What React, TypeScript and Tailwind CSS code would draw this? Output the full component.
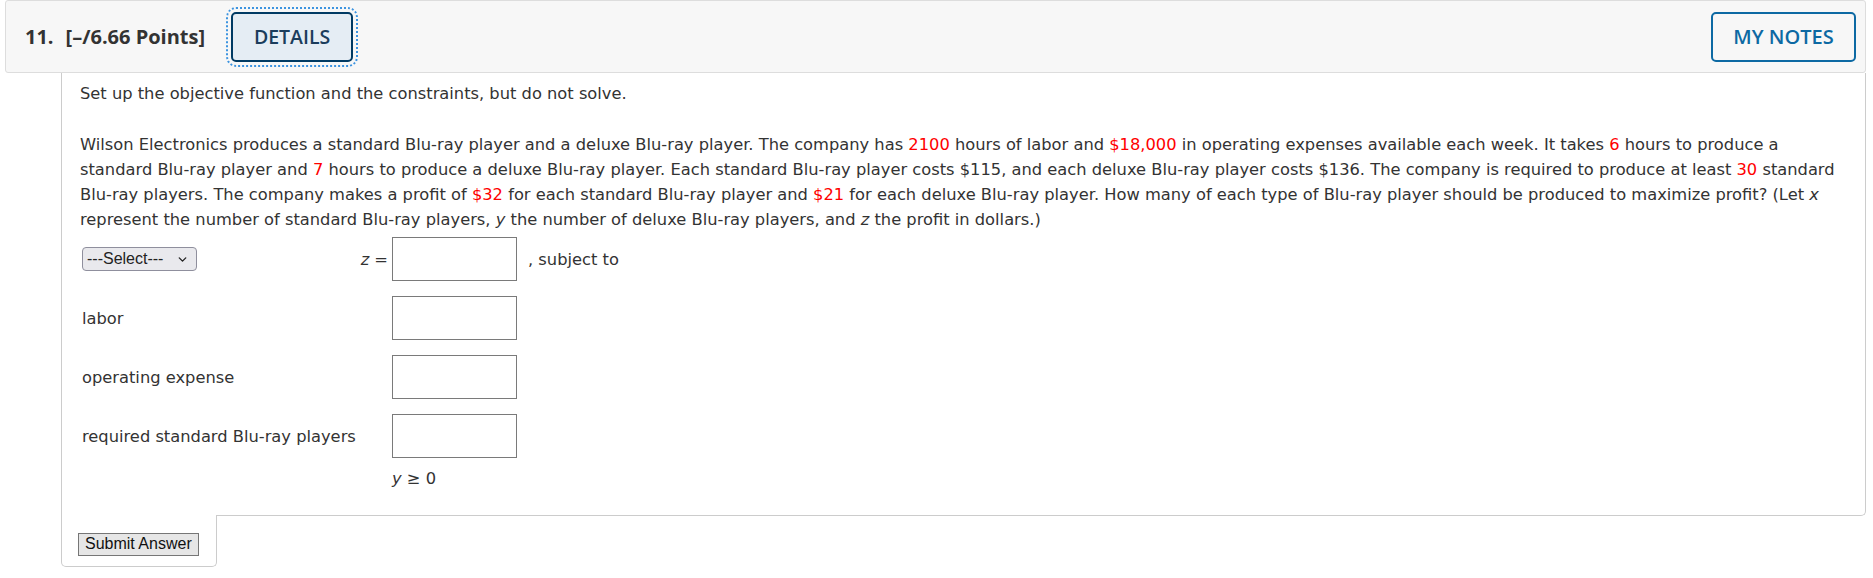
import { ChevronDown } from "lucide-react";

const body = "font-['DejaVu_Sans',Verdana,sans-serif]";
const arial = "font-['Liberation_Sans',Arial,sans-serif]";

const Red = ({ children }: { children: React.ReactNode }) => (
    <span className="text-[#ff0000]">{children}</span>
);

const AnswerBox = () => (
    <input type="text" className="w-[125px] h-[44px] border border-[#7a7a7a] bg-white outline-none" />
);

const App = () => {
    return (
        <div className="w-[1873px] h-[578px] bg-white pl-[5px] pr-[7px]">
            {/* question header */}
            <div className="flex items-center h-[73px] border border-[#dddddd] rounded-[3px] bg-[#f7f7f7] pl-[19px] pr-[9px] font-['Open_Sans',sans-serif] text-[#333333]">
                <span className="text-[20px] font-bold mr-[12px]">11.</span>
                <span className="text-[20px] font-bold">[–/6.66 Points]</span>
                <button className="ml-[26px] w-[122px] h-[50px] border-2 border-[#003a63] rounded-[5px] bg-[#e5edf4] text-[#1b3d5c] text-[19.5px] font-semibold outline-2 outline-dotted outline-[#3d94e0] outline-offset-[3px]">
                    DETAILS
                </button>
                <button className="ml-auto w-[145px] h-[50px] border-2 border-[#0d69a3] rounded-[5px] text-[#0d69a3] text-[20px] font-semibold">
                    MY NOTES
                </button>
            </div>

            {/* question body */}
            <div className={`ml-[56px] border-x border-b border-[#cccccc] rounded-br-[5px] pl-[18px] pr-[16px] pt-[8px] pb-[24px] ${body} text-[16.3px] leading-[25px] text-[#333333]`}>
                <p>Set up the objective function and the constraints, but do not solve.</p>
                <p className="mt-[26px]">
                    Wilson Electronics produces a standard Blu-ray player and a deluxe Blu-ray player. The company has <Red>2100</Red> hours of labor and <Red>$18,000</Red> in operating expenses available each week. It takes <Red>6</Red> hours to produce a standard Blu-ray player and <Red>7</Red> hours to produce a deluxe Blu-ray player. Each standard Blu-ray player costs $115, and each deluxe Blu-ray player costs $136. The company is required to produce at least <Red>30</Red> standard Blu-ray players. The company makes a profit of <Red>$32</Red> for each standard Blu-ray player and <Red>$21</Red> for each deluxe Blu-ray player. How many of each type of Blu-ray player should be produced to maximize profit? (Let <i>x</i> represent the number of standard Blu-ray players, <i>y</i> the number of deluxe Blu-ray players, and <i>z</i> the profit in dollars.)
                </p>

                <div className="mt-[5px] ml-[2px] grid grid-cols-[278px_32px_auto] gap-y-[15px] items-center">
                    <div>
                        <div className={`relative w-[115px] h-[24px] border border-[#8f8f9d] rounded-[4px] bg-[#e9e9ed] ${arial} text-[16px] leading-[22px] text-[#222222] pl-[4px]`}>
                            ---Select---
                            <ChevronDown className="absolute right-[7px] top-[5px] w-[13px] h-[13px]" strokeWidth={2.5} />
                        </div>
                    </div>
                    <div className="text-right pr-[4px] whitespace-nowrap">
                        <i>z</i> =
                    </div>
                    <div className="flex items-center">
                        <AnswerBox />
                        <span className="ml-[11px]">, subject to</span>
                    </div>

                    <div className="whitespace-nowrap">labor</div>
                    <div />
                    <div>
                        <AnswerBox />
                    </div>

                    <div className="whitespace-nowrap">operating expense</div>
                    <div />
                    <div>
                        <AnswerBox />
                    </div>

                    <div className="whitespace-nowrap">required standard Blu-ray players</div>
                    <div />
                    <div>
                        <AnswerBox />
                    </div>
                </div>
                <div className="mt-[8px] ml-[312px]">
                    <i>y</i> ≥ 0
                </div>
            </div>

            {/* submit tab */}
            <div className="relative -mt-px ml-[56px] w-[156px] h-[52px] bg-white border-x border-b border-[#cccccc] rounded-b-[5px] pl-[16px] pt-[16px]">
                <button className={`h-[23px] px-[6px] border border-[#767676] bg-[#e6e6e6] ${arial} text-[16px] leading-[20px] text-[#111111]`}>
                    Submit Answer
                </button>
            </div>
        </div>
    );
};

export default App;
